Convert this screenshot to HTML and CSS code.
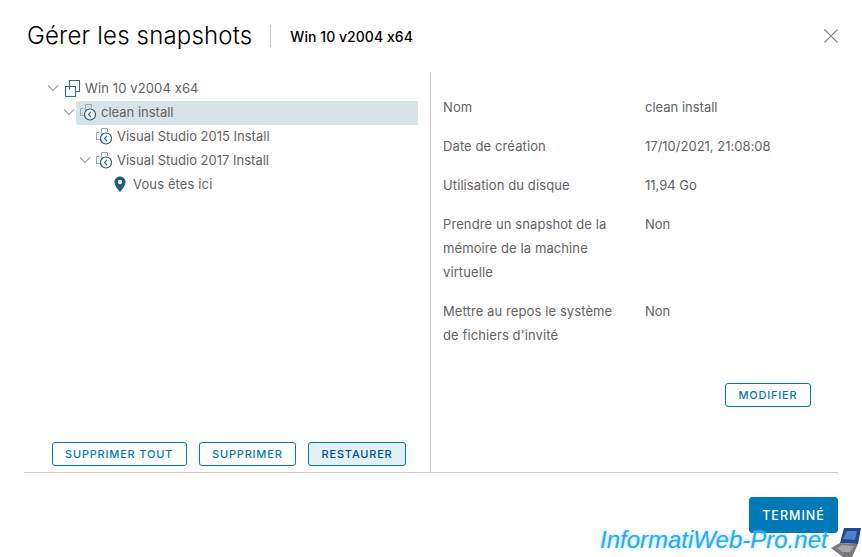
FILE: index.html
```html
<!DOCTYPE html>
<html lang="fr">
<head>
  <meta charset="UTF-8">
  <title>Gérer les snapshots</title>
  <link rel="stylesheet" href="styles.css">
</head>
<body>
  <svg class="defs" width="0" height="0">
    <symbol id="snap" viewBox="0 0 18 18">
      <path d="M6.500 6V1.500h6V5M4.500 5.500H1.500v7h4M6.500 6.500h3M6.500 6v6" fill="none" stroke="#8fa9b8" stroke-width="1"/>
      <circle cx="11" cy="11.500" r="5.500" fill="#fff" stroke="#1d5e80" stroke-width="1.200"/>
      <path d="M12 8.800 9.500 11.500l2.500 2.500" fill="none" stroke="#1d5e80" stroke-width="1.100"/>
    </symbol>
    <symbol id="chev" viewBox="0 0 12 8">
      <path d="M1 1.500 6 6.500l5-5" fill="none" stroke="#a3aeb5" stroke-width="1.200"/>
    </symbol>
  </svg>

  <div class="dialog">
    <header class="dialog-head">
      <h1>Gérer les snapshots</h1>
      <span class="head-vm">Win 10 v2004 x64</span>
      <svg class="close" width="14" height="14" viewBox="0 0 14 14">
        <path d="M.5.500 13.500 13.500M13.500.500.500 13.500" stroke="#7d8b93" stroke-width="1.100" fill="none"/>
      </svg>
    </header>

    <div class="dialog-body">
      <section class="left">
        <ul class="tree">
          <li class="node lvl0">
            <svg class="chev"><use href="#chev"/></svg>
            <svg class="ico" viewBox="0 0 18 18">
              <path d="M6.500 7V1.500h10v11H12M2.500 7.500h10v10h-10zM6.500 7.500v3" fill="none" stroke="#2f6f92" stroke-width="1.100"/>
            </svg>
            <span class="wide">Win 10 v2004 x64</span>
          </li>
          <li class="node lvl1 selected">
            <svg class="chev"><use href="#chev"/></svg>
            <svg class="ico"><use href="#snap"/></svg>
            <span>clean install</span>
          </li>
          <li class="node lvl2">
            <span class="chev"></span>
            <svg class="ico"><use href="#snap"/></svg>
            <span>Visual Studio 2015 Install</span>
          </li>
          <li class="node lvl2">
            <svg class="chev"><use href="#chev"/></svg>
            <svg class="ico"><use href="#snap"/></svg>
            <span>Visual Studio 2017 Install</span>
          </li>
          <li class="node lvl3">
            <span class="chev"></span>
            <svg class="ico" viewBox="0 0 18 18">
              <path fill-rule="evenodd" d="M9 1.500c3 0 5.500 2.400 5.500 5.500 0 3.500-3.500 7.500-5.500 10-2-2.500-5.500-6.500-5.500-10C3.500 3.900 6 1.500 9 1.500zM9 4.800a2.200 2.200 0 1 0 0 4.400 2.200 2.200 0 0 0 0-4.400z" fill="#1d5e80"/>
            </svg>
            <span class="wide">Vous êtes ici</span>
          </li>
        </ul>
        <div class="left-actions">
          <button class="btn">Supprimer tout</button>
          <button class="btn">Supprimer</button>
          <button class="btn active">Restaurer</button>
        </div>
      </section>

      <section class="right">
        <dl class="props">
          <div class="prop"><dt>Nom</dt><dd>clean install</dd></div>
          <div class="prop"><dt>Date de création</dt><dd>17/10/2021, 21:08:08</dd></div>
          <div class="prop"><dt>Utilisation du disque</dt><dd>11,94 Go</dd></div>
          <div class="prop"><dt>Prendre un snapshot de la mémoire de la machine virtuelle</dt><dd>Non</dd></div>
          <div class="prop"><dt>Mettre au repos le système de fichiers d'invité</dt><dd>Non</dd></div>
        </dl>
        <div class="right-actions">
          <button class="btn">Modifier</button>
        </div>
      </section>
    </div>

    <footer class="dialog-foot">
      <button class="btn primary">Terminé</button>
    </footer>
  </div>

  <div class="watermark">
    <span>InformatiWeb-Pro.net</span>
    <svg width="32" height="32" viewBox="0 0 32 32">
      <path d="M14 3h17l-3 16-18-1z" fill="#20478f"/>
      <path d="M17 6l10 0-2 9-12-1z" fill="#4f82c8"/>
      <path d="M1 23 10 18l18 1-6 13H13z" fill="#77797d"/>
      <path d="M7 23 12 20l12 1-4 6-8 0z" fill="#a4a6a8"/>
    </svg>
  </div>
</body>
</html>
```

FILE: styles.css
```css
* {
  box-sizing: border-box;
}
body {
  margin: 0;
  width: 862px;
  height: 557px;
  overflow: hidden;
  position: relative;
  background-color: #fff;
  font-family: Inter, "Noto Sans", sans-serif;
  font-size: 13px;
  font-feature-settings: "calt" 0;
  color: #626262;
}
.defs {
  position: absolute;
}
.dialog {
  display: flex;
  flex-direction: column;
  height: 557px;
  padding: 0 24px;
}
.dialog-head {
  display: flex;
  align-items: center;
  height: 72px;
  padding: 0 0 0 3px;
}
.dialog-head h1 {
  margin: 0;
  padding-right: 18px;
  border-right: 1px solid #ccc;
  font-size: 24px;
  line-height: 22px;
  font-weight: 300;
  letter-spacing: .17px;
  color: #000;
}
.head-vm {
  margin-left: 19px;
  font-size: 14px;
  font-weight: 500;
  letter-spacing: .05px;
  color: #000;
}
.close {
  margin-left: auto;
}
.dialog-body {
  display: flex;
  height: 401px;
  border-bottom: 1px solid #ccc;
}
.left {
  width: 407px;
  display: flex;
  flex-direction: column;
  justify-content: space-between;
  border-right: 1px solid #ccc;
  padding-top: 5px;
}
.tree {
  list-style: none;
  margin: 0;
  padding: 0;
}
.node {
  display: flex;
  align-items: center;
  height: 24px;
  padding-bottom: 2px;
  gap: 4px;
}
.node .wide {
  letter-spacing: .12px;
}
.node .chev {
  width: 12px;
  height: 8px;
}
.node .ico {
  width: 18px;
  height: 18px;
}
.lvl0 {
  padding-left: 23px;
}
.lvl1 {
  padding-left: 39px;
}
.lvl2 {
  padding-left: 55px;
}
.lvl3 {
  padding-left: 71px;
}
.selected {
  margin-left: 52px;
  margin-right: 12px;
  padding-left: 0;
  background-color: #d8e3e9;
  border-radius: 3px 0 0 3px;
}
.selected .chev {
  margin-left: -13px;
}
.left-actions {
  display: flex;
  justify-content: flex-end;
  gap: 12px;
  padding: 0 24px 6px 0;
}
.btn {
  height: 24px;
  padding: 0 12.500px;
  border: 1px solid #0079b8;
  border-radius: 3px;
  background-color: #fff;
  color: #0079b8;
  font-family: inherit;
  font-size: 11px;
  font-weight: 500;
  letter-spacing: .8px;
  text-transform: uppercase;
}
.btn.active {
  background-color: #e1f1f6;
  color: #004d8a;
}
.right {
  flex: 1;
  padding: 23px 0 0 12px;
  display: flex;
  flex-direction: column;
}
.props {
  margin: 0;
}
.prop {
  display: flex;
  margin-bottom: 15px;
  line-height: 24px;
}
.prop dt {
  width: 202px;
  padding-right: 24px;
  letter-spacing: .1px;
}
.prop dd {
  margin: 0;
}
.right-actions {
  display: flex;
  justify-content: flex-end;
  margin-top: 21px;
  padding-right: 27px;
}
.dialog-foot {
  display: flex;
  justify-content: flex-end;
  padding-top: 24px;
}
.btn.primary {
  height: 36px;
  width: 89px;
  padding: 0;
  background-color: #0079b8;
  color: #fff;
  font-size: 12.500px;
  letter-spacing: 1px;
}
.watermark {
  position: absolute;
  left: 600px;
  top: 523px;
  display: flex;
  align-items: flex-end;
  gap: 2px;
}
.watermark span {
  font-family: "Liberation Sans", sans-serif;
  font-style: italic;
  font-size: 24px;
  line-height: 34px;
  color: #2aaaf5;
  text-shadow: 0 0 3px #8fd6ff;
}
```
